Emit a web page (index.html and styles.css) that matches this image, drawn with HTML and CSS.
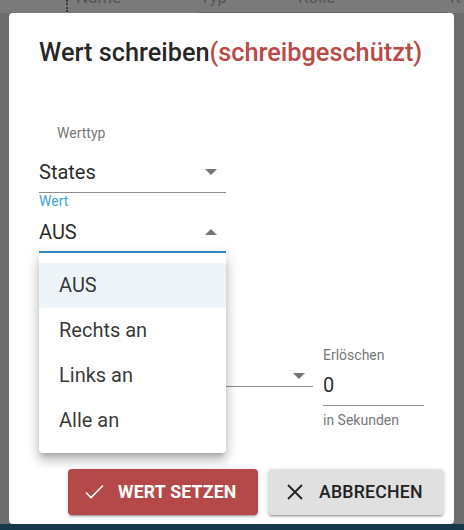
FILE: index.html
```html
<!DOCTYPE html>
<html lang="de">
<head>
<meta charset="utf-8">
<title>Wert schreiben</title>
<link rel="stylesheet" href="styles.css">
</head>
<body>
<div class="bg-header">
  <div class="bg-cell first"><span class="dots"></span><span class="bg-text">Name</span></div>
  <div class="bg-cell typ"><span class="bg-text">Typ</span></div>
  <div class="bg-cell rolle"><span class="bg-text">Rolle</span></div>
  <div class="bg-cell last"><span class="bg-text">R</span></div>
</div>
<div class="dialog">
  <h2 class="title">Wert schreiben<span class="ro">(schreibgeschützt)</span></h2>

  <div class="field field-type">
    <div class="label">Werttyp</div>
    <div class="select">
      <span class="value">States</span>
      <span class="arrow down"></span>
    </div>
  </div>

  <div class="field field-value">
    <div class="label">Wert</div>
    <div class="select">
      <span class="value">AUS</span>
      <span class="arrow up"></span>
    </div>
  </div>

  <div class="row2">
    <div class="field field-ack">
      <div class="label">&nbsp;</div>
      <div class="select">
        <span class="value"></span>
        <span class="arrow down"></span>
      </div>
    </div>
    <div class="field field-expire">
      <div class="label">Erlöschen</div>
      <div class="input">0</div>
      <div class="helper">in Sekunden</div>
    </div>
  </div>

  <div class="actions">
    <button class="btn btn-primary">
      <svg class="ico" viewBox="0 0 24 24" width="24" height="24"><polyline points="3,12.5 8,17.5 20,5.5" fill="none" stroke="#fff" stroke-width="1.6"/></svg>
      <span>WERT SETZEN</span>
    </button>
    <button class="btn btn-cancel">
      <svg class="ico" viewBox="0 0 24 24" width="24" height="24"><path d="M5 5L19 19M19 5L5 19" fill="none" stroke="#222" stroke-width="1.8"/></svg>
      <span>ABBRECHEN</span>
    </button>
  </div>

  <ul class="menu">
    <li class="item selected">AUS</li>
    <li class="item">Rechts an</li>
    <li class="item">Links an</li>
    <li class="item">Alle an</li>
  </ul>
</div>
<div class="footer-bar"></div>
</body>
</html>
```

FILE: styles.css
```css
html, body {
  margin: 0;
  padding: 0;
}
body {
  width: 464px;
  height: 530px;
  overflow: hidden;
  background: #6d6d6d;
  font-family: Roboto, "Liberation Sans", sans-serif;
}

/* background page header behind the backdrop */
.bg-header {
  height: 13px;
  background: #7a7a7a;
  display: flex;
  overflow: hidden;
}
.bg-cell {
  display: flex;
  align-items: flex-start;
  box-sizing: border-box;
  height: 13px;
}
.bg-cell.first { width: 197px; padding-left: 66px; }
.bg-cell.typ { width: 100px; border-bottom: 1px solid #6c6c6c; padding-left: 3px; }
.bg-cell.rolle { width: 150px; border-bottom: 1px solid #6c6c6c; padding-left: 1px; }
.bg-cell.last { flex: 1; padding-left: 3px; }
.bg-text {
  font-size: 17px;
  line-height: 20px;
  margin-top: -13px;
  color: #555;
}
.dots {
  width: 0;
  height: 12px;
  border-left: 2px dotted #3c3c3c;
  margin-right: 8px;
}

/* dialog */
.dialog {
  position: relative;
  margin-left: 9px;
  width: 445px;
  height: 511px;
  box-sizing: border-box;
  background: #fff;
  border-radius: 4px;
  padding: 24px 10px 9px 30px;
  display: flex;
  flex-direction: column;
}
.title {
  margin: 0;
  font-size: 25.3px;
  line-height: 32px;
  font-weight: 500;
  color: rgba(0, 0, 0, 0.87);
  white-space: nowrap;
}
.title .ro {
  color: #b94a48;
}

.field .label {
  font-size: 14px;
  line-height: 16px;
  color: #777;
}
.select {
  display: flex;
  align-items: center;
  justify-content: space-between;
  font-size: 20px;
  line-height: 24px;
  color: rgba(0, 0, 0, 0.85);
  padding-right: 9px;
}
.arrow {
  width: 0;
  height: 0;
  border-left: 6px solid transparent;
  border-right: 6px solid transparent;
}
.arrow.down { border-top: 6px solid #767676; }
.arrow.up { border-bottom: 6px solid #767676; }

.field-type {
  margin-top: 56px;
  width: 187px;
}
.field-type .label {
  padding-left: 18px;
}
.field-type .select {
  margin-top: 19px;
  padding-bottom: 8px;
  border-bottom: 1px solid #8c8c8c;
}

.field-value {
  width: 187px;
}
.field-value .label {
  color: #3f9fd8;
}
.field-value .select {
  margin-top: 11px;
  padding-bottom: 7px;
  border-bottom: 2px solid #2f8bcb;
}

.row2 {
  margin-top: 94px;
  display: flex;
  gap: 10px;
}
.field-ack {
  width: 274px;
}
.field-ack .select {
  margin-top: 10px;
  padding-bottom: 7px;
  padding-right: 8px;
  border-bottom: 1px solid #8c8c8c;
}
.field-expire {
  width: 101px;
}
.field-expire .input {
  margin-top: 10px;
  font-size: 20px;
  line-height: 24px;
  color: rgba(0, 0, 0, 0.85);
  padding-bottom: 8px;
  border-bottom: 1px solid #8c8c8c;
}
.field-expire .helper {
  margin-top: 6px;
  font-size: 14px;
  line-height: 16px;
  color: #777;
}

.actions {
  margin-top: auto;
  display: flex;
  justify-content: flex-end;
  gap: 10px;
}
.btn {
  display: flex;
  align-items: center;
  height: 46px;
  box-sizing: border-box;
  border: none;
  border-radius: 4px;
  padding: 0 0 0 15px;
  font-family: Roboto, "Liberation Sans", sans-serif;
  font-size: 17.7px;
  font-weight: 500;
  letter-spacing: 0.2px;
  box-shadow: 0 3px 1px -2px rgba(0,0,0,.2), 0 2px 2px 0 rgba(0,0,0,.14), 0 1px 5px 0 rgba(0,0,0,.12);
}
.btn-primary {
  width: 190px;
  background: #b5494a;
  color: #fff;
  font-weight: 700;
}
.btn-primary .ico { margin-right: 11px; }
.btn-cancel {
  width: 176px;
  background: #e0e0e0;
  color: #222;
}
.btn-cancel .ico { margin-right: 12px; }
.ico { flex: none; }

/* open select menu, overlays the form */
.menu {
  position: absolute;
  left: 30px;
  top: 240px;
  width: 187px;
  margin: 0;
  padding: 10px 0;
  list-style: none;
  background: #fff;
  border-radius: 4px;
  box-shadow: 0 5px 5px -3px rgba(0,0,0,.2), 0 8px 10px 1px rgba(0,0,0,.14), 0 3px 14px 2px rgba(0,0,0,.12);
}
.item {
  height: 45px;
  line-height: 45px;
  padding-left: 20px;
  font-size: 20px;
  color: rgba(0, 0, 0, 0.8);
}
.item.selected {
  background: #edf5f8;
}

.footer-bar {
  height: 6px;
  background: #15394b;
}
```
